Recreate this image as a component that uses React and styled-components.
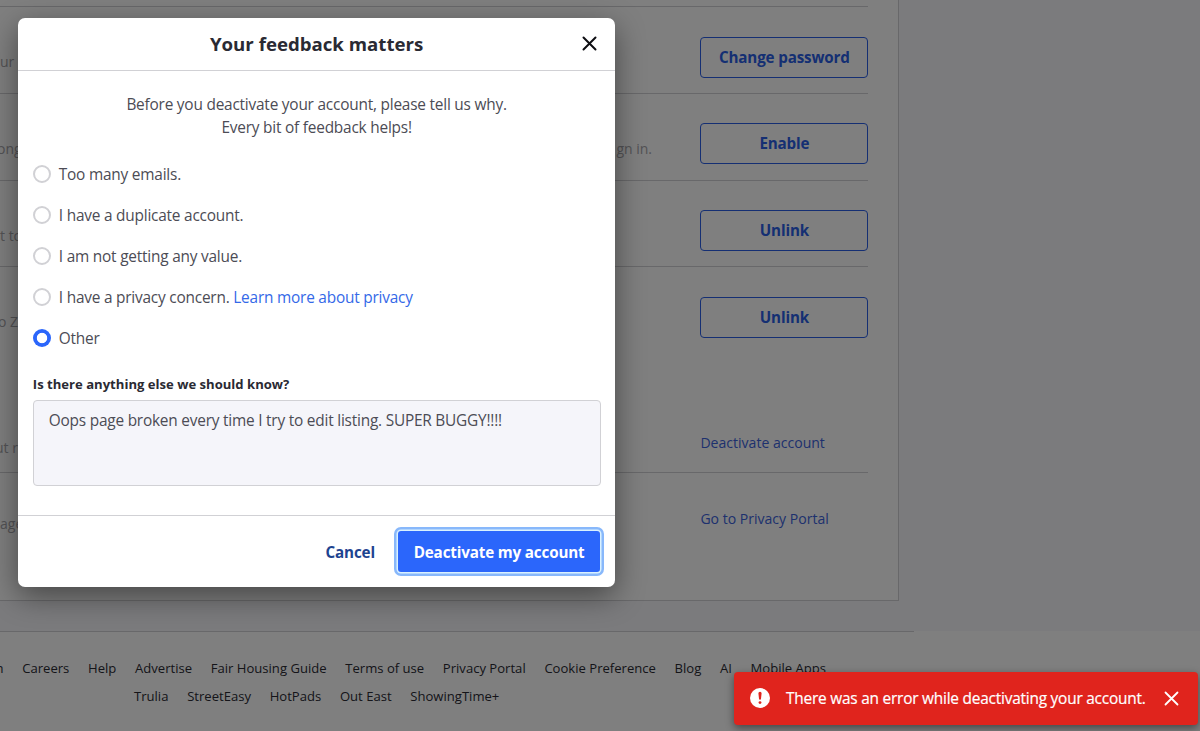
import React, { useState } from "react";
import styled, { createGlobalStyle } from "styled-components";

const GlobalStyle = createGlobalStyle`
  * {
    box-sizing: border-box;
  }

  body {
    margin: 0;
    font-family: "Open Sans", sans-serif;
    font-size: 15.4px;
    letter-spacing: -0.21px;
    color: #2a2a33;
    overflow: hidden;
  }

  button, textarea {
    font-family: inherit;
    letter-spacing: inherit;
  }
`;

const Page = styled.div`
  position: relative;
  width: 100%;
  height: 731px;
  overflow: hidden;
  background-color: #fff;
`;

const Account = styled.main`
  height: 631px;
  background-color: #f6f6fa;
`;

const Panel = styled.section`
  width: 899px;
  height: 601px;
  padding: 6px 30px 0 0;
  background-color: #fff;
  border-right: 1px solid #d1d1d5;
  border-bottom: 1px solid #d1d1d5;
`;

const Setting = styled.div`
  display: grid;
  grid-template-columns: 652px 168px;
  justify-content: space-between;
  width: 868.4px;
  height: ${({ $height }) => $height || 86.8}px;
  padding-top: ${({ $top }) => $top || 29.5}px;
  border-top: ${({ $line }) => ($line ? "1px solid #d1d1d5" : "none")};
`;

const Description = styled.div`
  display: flex;
  justify-content: space-between;
  margin-top: ${({ $top }) => $top || 15.5}px;
  margin-left: ${({ $shift }) => $shift || 0}px;
  font-size: 14px;
  letter-spacing: 0;
  line-height: 20px;
  color: #a7a6ab;
  white-space: pre;
`;

const OutlineButton = styled.button`
  width: 168px;
  height: 41px;
  padding: 0 0 1px;
  font-size: 15.2px;
  font-weight: 700;
  letter-spacing: -0.15px;
  line-height: 22px;
  color: #2a5fe6;
  background-color: transparent;
  border: 1px solid #2a5fe6;
  border-radius: 4px;
`;

const PageLink = styled.a`
  font-size: 14.06px;
  letter-spacing: 0;
  line-height: 20px;
  color: #3c63dc;
`;

const Footer = styled.footer`
  width: 914px;
  height: 100px;
  padding-top: 22px;
  border-top: 1px solid #d1d1d5;
`;

const FooterLinks = styled.nav`
  display: flex;
  gap: 18.7px;
  height: 28px;
  margin-left: ${({ $left }) => $left}px;
  font-size: 13.08px;
  letter-spacing: 0;
  line-height: 28px;
  color: #2a2a33;
  white-space: nowrap;
`;

const Overlay = styled.div`
  position: absolute;
  inset: 0;
  padding: 17.5px 0 0 17.8px;
  background-color: rgba(0, 0, 0, 0.5);
`;

const Modal = styled.div`
  display: flex;
  flex-direction: column;
  width: 597.6px;
  height: 569.5px;
  background-color: #fff;
  border-radius: 7px;
  box-shadow: 0 9px 30px rgba(0, 0, 0, 0.45);
`;

const ModalHeader = styled.div`
  position: relative;
  height: 53.5px;
  border-bottom: 1px solid #d1d1d5;

  h2 {
    margin: 0;
    font-size: 18.65px;
    font-weight: 700;
    letter-spacing: 0;
    line-height: 52px;
    text-align: center;
  }
`;

const CloseButton = styled.button`
  display: flex;
  padding: 0;
  border: none;
  background: none;
  color: ${({ $color }) => $color};
`;

const HeaderClose = styled(CloseButton)`
  position: absolute;
  top: 18.5px;
  right: 18.6px;
`;

const ModalBody = styled.div`
  flex: 1;
  padding: 23px 15px 0;
`;

const Intro = styled.p`
  margin: 0 0 14.5px;
  line-height: 22.5px;
  text-align: center;
  color: #4c4c55;
`;

const Option = styled.label`
  display: flex;
  align-items: center;
  gap: 7.5px;
  height: 41px;
  color: #4c4c55;

  a {
    color: #3469e8;
  }
`;

const Radio = styled.input`
  appearance: none;
  width: 18.5px;
  height: 18.5px;
  margin: 0;
  background-color: #fff;
  border: 2px solid #d1d1d5;
  border-radius: 50%;

  &:checked {
    border: none;
    background: radial-gradient(circle, #fff 4.8px, #2b66fb 5.6px);
  }
`;

const NoteLabel = styled.label`
  display: block;
  margin-top: 15px;
  font-size: 13.1px;
  letter-spacing: 0;
  font-weight: 700;
  line-height: 20px;
`;

const Note = styled.textarea`
  display: block;
  width: 567.8px;
  height: 86px;
  margin-top: 6px;
  padding: 8px 15px;
  font-size: 15.4px;
  line-height: 23px;
  color: #4c4c55;
  background-color: #f5f5fa;
  border: 1px solid #d1d1d5;
  border-radius: 4px;
  outline: none;
  resize: none;
`;

const ModalFooter = styled.div`
  display: flex;
  justify-content: flex-end;
  gap: 23px;
  height: 72px;
  padding: 15px 15px 0;
  border-top: 1px solid #d1d1d5;
`;

const ModalButton = styled.button`
  height: 41px;
  padding: 0;
  font-size: 15.2px;
  letter-spacing: -0.15px;
  font-weight: 700;
  color: #1d4390;
  background: none;
  border: none;
`;

const ConfirmButton = styled(ModalButton)`
  width: 202.5px;
  color: #fff;
  background-color: #2b66fb;
  border-radius: 3px;
  box-shadow: 0 0 0 1.5px #d9f1ff, 0 0 0 4px #88b8fb;
`;

const Toast = styled.div`
  position: absolute;
  right: 2.5px;
  bottom: 6.5px;
  display: flex;
  align-items: center;
  width: 463.5px;
  height: 52.5px;
  padding: 0 18.5px 0 16px;
  color: #fff;
  background-color: #e0241d;
  border-radius: 4px;
  box-shadow: 0 3px 8px rgba(0, 0, 0, 0.45);

  span {
    flex: 1;
    margin-left: 16px;
    -webkit-text-stroke: 0.2px #fff;
    white-space: nowrap;
  }
`;

const CloseIcon = ({ size = 15, stroke = 2 }) => (
  <svg width={size} height={size} viewBox="0 0 15 15" fill="none" stroke="currentColor" strokeWidth={stroke} strokeLinecap="round">
    <path d="M1.5 1.5l12 12M13.5 1.5l-12 12" />
  </svg>
);

const AlertIcon = () => (
  <svg width="20" height="20" viewBox="0 0 20 20">
    <circle cx="10" cy="10" r="10" fill="#fff" />
    <path d="M8.4 5.3a1.6 1.6 0 0 1 3.2 0l-.6 5.5a1 1 0 0 1-2 0z" fill="#e0241d" />
    <circle cx="10" cy="14.6" r="1.4" fill="#e0241d" />
  </svg>
);

const settings = [
  { start: "ur", action: "Change password" },
  { start: "ong", shift: -3, end: "gn in.", action: "Enable" },
  { start: "t to", action: "Unlink" },
  { start: "o Z", shift: -2, action: "Unlink" },
];

const reasons = [
  { id: "emails", text: "Too many emails." },
  { id: "duplicate", text: "I have a duplicate account." },
  { id: "value", text: "I am not getting any value." },
  { id: "privacy", text: "I have a privacy concern.", link: "Learn more about privacy" },
  { id: "other", text: "Other" },
];

const companyLinks = [
  "n",
  "Careers",
  "Help",
  "Advertise",
  "Fair Housing Guide",
  "Terms of use",
  "Privacy Portal",
  "Cookie Preference",
  "Blog",
  "AI",
  "Mobile Apps",
];

const brandLinks = ["Trulia", "StreetEasy", "HotPads", "Out East", "ShowingTime+"];

const App = () => {
  const [reason, setReason] = useState("other");
  const [note, setNote] = useState(
    "Oops page broken every time I try to edit listing. SUPER BUGGY!!!!"
  );

  return (
    <Page>
      <GlobalStyle />
      <Account>
        <Panel>
          {settings.map((item, index) => (
            <Setting key={index} $line>
              <Description $shift={item.shift}>
                <span>{item.start}</span>
                <span>{item.end}</span>
              </Description>
              <OutlineButton>{item.action}</OutlineButton>
            </Setting>
          ))}
          <Setting $height={118.8} $top={79.8}>
            <Description $top={5} $shift={-5}>ut r</Description>
            <PageLink>Deactivate account</PageLink>
          </Setting>
          <Setting $line $top={36}>
            <Description $top={5}>age</Description>
            <PageLink>Go to Privacy Portal</PageLink>
          </Setting>
        </Panel>
      </Account>
      <Footer>
        <FooterLinks $left={-4.5}>
          {companyLinks.map((link) => (
            <a key={link}>{link}</a>
          ))}
        </FooterLinks>
        <FooterLinks $left={134}>
          {brandLinks.map((link) => (
            <a key={link}>{link}</a>
          ))}
        </FooterLinks>
      </Footer>

      <Overlay>
        <Modal role="dialog">
          <ModalHeader>
            <h2>Your feedback matters</h2>
            <HeaderClose $color="#0d0d12" aria-label="Close">
              <CloseIcon />
            </HeaderClose>
          </ModalHeader>
          <ModalBody>
            <Intro>
              Before you deactivate your account, please tell us why.
              <br />
              Every bit of feedback helps!
            </Intro>
            {reasons.map((item) => (
              <Option key={item.id}>
                <Radio
                  type="radio"
                  name="reason"
                  checked={reason === item.id}
                  onChange={() => setReason(item.id)}
                />
                <span>
                  {item.text} {item.link && <a>{item.link}</a>}
                </span>
              </Option>
            ))}
            <NoteLabel htmlFor="note">Is there anything else we should know?</NoteLabel>
            <Note id="note" value={note} onChange={(e) => setNote(e.target.value)} />
          </ModalBody>
          <ModalFooter>
            <ModalButton>Cancel</ModalButton>
            <ConfirmButton>Deactivate my account</ConfirmButton>
          </ModalFooter>
        </Modal>
      </Overlay>

      <Toast role="alert">
        <AlertIcon />
        <span>There was an error while deactivating your account.</span>
        <CloseButton $color="#fff" aria-label="Dismiss">
          <CloseIcon stroke={1.8} />
        </CloseButton>
      </Toast>
    </Page>
  );
};

export default App;
